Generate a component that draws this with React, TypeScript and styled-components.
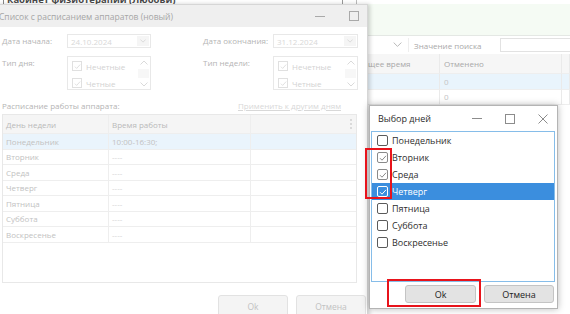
import React from 'react';
import styled, { createGlobalStyle } from 'styled-components';

const Global = createGlobalStyle`
  html, body { margin: 0; padding: 0; background: #fff; }
  body { font-family: "Open Sans", "Noto Sans", sans-serif; }
  * { box-sizing: border-box; }
`;

const Desktop = styled.div`
  position: relative;
  width: 570px;
  height: 314px;
  overflow: hidden;
  background: #fff;
`;

/* ---------- background application window ---------- */
const BgWindow = styled.div`
  display: flex;
  flex-direction: column;
  width: 100%;
  height: 100%;
`;
const BgTitleBar = styled.div`
  height: 4px;
  display: flex;
  align-items: flex-end;
  padding-left: 3px;
  border-left: 1px solid #888;
  margin-left: 3px;
`;
const BgTitle = styled.div`
  font-size: 9.5px;
  font-weight: 700;
  line-height: 12px;
  color: #4a4a4a;
  flex: 0 0 auto;
  margin-bottom: -2px;
`;
const BgMaxBox = styled.div`
  margin-left: auto;
  margin-right: 213px;
  width: 15px;
  height: 9px;
  margin-bottom: -4px;
  border: 1px solid #999;
  border-right-color: #bbb;
  background: #fff;
  flex: 0 0 auto;
`;
const BgPanel = styled.div`
  height: 32px;
  background: #f5fbf4;
  border-bottom: 1px solid #e4e8e4;
`;
const SearchRow = styled.div`
  height: 18px;
  display: grid;
  grid-template-columns: 409px 91px 1fr;
  align-items: center;
`;
const SelectCell = styled.div`
  height: 14px;
  display: flex;
  align-items: center;
  justify-content: flex-end;
  padding-right: 6px;
  border-right: 1px solid #eee;
`;
const SearchLabel = styled.span`
  font-size: 8px;
  color: #a9a9a9;
  padding-left: 5px;
`;
const SearchInput = styled.div`
  height: 14px;
  border: 1px solid #e2e2e2;
  border-right: none;
`;
const BgTable = styled.div`
  display: grid;
  grid-template-columns: 353px 87px 122px 1fr;
`;
const BgCell = styled.div<{ $head?: boolean; $sel?: boolean }>`
  height: ${p => (p.$head ? 20 : 15.5)}px;
  display: flex;
  align-items: center;
  padding-left: 4px;
  font-size: 8px;
  color: ${p => (p.$head ? '#a8a8a8' : '#c4c4c4')};
  background: ${p => (p.$head ? '#f6f6f6' : p.$sel ? '#e9f4fc' : '#fff')};
  border-right: 1px solid #eaeaea;
  border-bottom: 1px solid #eeeeee;
`;

/* ---------- main (disabled) dialog ---------- */
const MainDialog = styled.div`
  position: absolute;
  left: -4px;
  top: 4px;
  width: 372px;
  height: 330px;
  background: #fff;
  border: 1px solid #d6d6d6;
  box-shadow: 2px 0 4px rgba(0, 0, 0, 0.18);
  display: flex;
  flex-direction: column;
`;
const MainHeader = styled.div`
  height: 22px;
  background: #efefef;
  display: flex;
  align-items: center;
  padding-left: 2px;
  flex: 0 0 auto;
`;
const MainTitle = styled.span`
  font-size: 8.5px;
  color: #a6a6a6;
`;
const HeaderCtrls = styled.div`
  margin-left: auto;
  display: flex;
  align-items: center;
  gap: 24px;
  padding-right: 8px;
`;
const MinLine = styled.div<{ $c?: string }>`
  width: 10px;
  height: 1px;
  background: ${p => p.$c || '#a9a9a9'};
`;
const MaxBox = styled.div<{ $c?: string }>`
  width: 10px;
  height: 10px;
  border: 1px solid ${p => p.$c || '#a9a9a9'};
`;
const MainBody = styled.div`
  padding: 7px 10px 0 5px;
  display: flex;
  flex-direction: column;
`;
const FormGrid = styled.div`
  display: grid;
  grid-template-columns: 65px 84px 52px 70px 85px;
  grid-template-rows: 14px 34px;
  row-gap: 8px;
  align-items: start;
`;
const FieldLabel = styled.span`
  font-size: 8px;
  color: #b4b4b4;
  line-height: 14px;
  white-space: nowrap;
`;
const DateBox = styled.div`
  height: 14px;
  border: 1px solid #e8e8e8;
  display: flex;
  align-items: center;
  padding-left: 3px;
  font-size: 8px;
  color: #d8d8d8;
`;
const DropBtn = styled.div`
  margin-left: auto;
  margin-right: 1px;
  width: 12px;
  height: 10px;
  background: #f5f5f5;
  display: flex;
  align-items: center;
  justify-content: center;
`;
const CheckList = styled.div`
  height: 34px;
  border: 1px solid #e8e8e8;
  display: flex;
`;
const CheckItems = styled.div`
  flex: 1;
  display: flex;
  flex-direction: column;
  padding: 4px 0 0 4px;
  gap: 7px;
`;
const CheckItem = styled.div`
  display: flex;
  align-items: center;
  gap: 4px;
  font-size: 8px;
  color: #d2d2d2;
  height: 10px;
`;
const FadedBox = styled.div`
  width: 10px;
  height: 10px;
  border: 1px solid #e0e0e0;
  display: flex;
  align-items: center;
  justify-content: center;
`;
const ScrollBar = styled.div`
  width: 13px;
  display: flex;
  flex-direction: column;
  align-items: center;
  justify-content: space-between;
  padding: 3px 0 2px;
`;
const ScrollMid = styled.div`
  width: 11px;
  height: 9px;
  background: #f7f7f7;
`;
const SectionRow = styled.div`
  display: flex;
  align-items: center;
  margin-top: 9px;
  height: 12px;
  font-size: 8px;
`;
const SectionLabel = styled.span`
  color: #b4b4b4;
`;
const ApplyLink = styled.span`
  margin-left: auto;
  margin-right: 16px;
  color: #d8d8d8;
  text-decoration: underline;
`;
const SchedTable = styled.div`
  margin-top: 3px;
  height: 169px;
  border: 1px solid #e8e8e8;
  display: flex;
  flex-direction: column;
`;
const SchedRow = styled.div<{ $head?: boolean; $sel?: boolean }>`
  display: grid;
  grid-template-columns: 106px 142px 1fr;
  height: ${p => (p.$head ? 19 : 15.5)}px;
  background: ${p => (p.$head ? '#f5f5f5' : p.$sel ? '#eaf4fc' : '#fff')};
  border-bottom: 1px solid #eeeeee;
  flex: 0 0 auto;
`;
const SchedCell = styled.div<{ $head?: boolean; $dim?: boolean }>`
  display: flex;
  align-items: center;
  padding-left: 3px;
  font-size: 8px;
  color: ${p => (p.$head ? '#b9b9b9' : p.$dim ? '#d4d4d4' : '#c2c2c2')};
  border-right: 1px solid #eeeeee;
  &:last-child { border-right: none; justify-content: flex-end; padding-right: 4px; }
`;
const Dots = styled.div`
  display: flex;
  flex-direction: column;
  gap: 2px;
  span { width: 2px; height: 2px; background: #d0d0d0; border-radius: 1px; }
`;
const MainFooter = styled.div`
  display: flex;
  justify-content: flex-end;
  gap: 8px;
  margin-top: 12px;
  margin-right: -9px;
`;
const FadedBtn = styled.div`
  width: 70px;
  height: 22px;
  border: 1px solid #e2e2e2;
  border-radius: 3px;
  background: #f4f4f4;
  display: flex;
  align-items: center;
  justify-content: center;
  font-size: 8.5px;
  color: #c2c2c2;
`;

/* ---------- modal "Выбор дней" ---------- */
const Modal = styled.div`
  position: absolute;
  left: 369px;
  top: 105px;
  width: 189px;
  height: 204px;
  background: #fff;
  border: 1px solid #b4b4b4;
  box-shadow: 0 0 7px rgba(0, 0, 0, 0.28);
  display: flex;
  flex-direction: column;
`;
const ModalHeader = styled.div`
  height: 25px;
  display: flex;
  align-items: center;
  padding-left: 8px;
  flex: 0 0 auto;
`;
const ModalTitle = styled.span`
  font-size: 9px;
  color: #2b2b2b;
`;
const ModalCtrls = styled.div`
  margin-left: auto;
  display: flex;
  align-items: center;
  gap: 23px;
  padding-right: 9px;
`;
const DayList = styled.div`
  margin: 0 2px 0 1px;
  height: 151px;
  border: 1px solid #86bde9;
  display: flex;
  flex-direction: column;
`;
const DayItem = styled.div<{ $sel?: boolean }>`
  height: 17px;
  display: flex;
  align-items: center;
  padding-left: 5px;
  gap: 4px;
  font-size: 9px;
  color: ${p => (p.$sel ? '#fff' : '#2e2e2e')};
  background: ${p => (p.$sel ? '#3b8ede' : 'transparent')};
  flex: 0 0 auto;
`;
const Box = styled.div<{ $state: 'off' | 'on' | 'sel' }>`
  width: 11px;
  height: 11px;
  border-radius: 2px;
  border: 1px solid ${p => (p.$state === 'sel' ? '#fff' : p.$state === 'on' ? '#8a8a8a' : '#5a5a5a')};
  background: ${p => (p.$state === 'sel' ? '#3b8ede' : '#fff')};
  display: flex;
  align-items: center;
  justify-content: center;
`;
const ModalFooter = styled.div`
  display: flex;
  justify-content: flex-end;
  gap: 8px;
  padding: 3px 3px 0 0;
`;
const Btn = styled.div<{ $w: number }>`
  width: ${p => p.$w}px;
  height: 18px;
  border: 1px solid #c4c4c4;
  border-radius: 3px;
  background: #e3e3e3;
  display: flex;
  align-items: center;
  justify-content: center;
  font-size: 9px;
  color: #222;
`;

/* ---------- red annotation frames ---------- */
const Highlight = styled.div`
  position: absolute;
  border: 2px solid #e8131b;
`;

const Chevron = ({ up, c = '#cfcfcf', w = 8 }: { up?: boolean; c?: string; w?: number }) => (
  <svg width={w} height={w / 2 + 1} viewBox="0 0 8 5">
    <polyline points={up ? '0.5,4.5 4,1 7.5,4.5' : '0.5,0.5 4,4 7.5,0.5'} fill="none" stroke={c} strokeWidth="0.9" />
  </svg>
);

const Tick = ({ c, w = 8 }: { c: string; w?: number }) => (
  <svg width={w} height={w} viewBox="0 0 8 8">
    <polyline points="1,4.2 3,6.2 7,1.8" fill="none" stroke={c} strokeWidth="1" />
  </svg>
);

const days = ['Понедельник', 'Вторник', 'Среда', 'Четверг', 'Пятница', 'Суббота', 'Воскресенье'];
const dayStates: ('off' | 'on' | 'sel')[] = ['off', 'on', 'on', 'sel', 'off', 'off', 'off'];

const FadedChecks = () => (
  <CheckList>
    <CheckItems>
      <CheckItem><FadedBox><Tick c="#dcdcdc" w={7} /></FadedBox>Нечетные</CheckItem>
      <CheckItem><FadedBox><Tick c="#dcdcdc" w={7} /></FadedBox>Четные</CheckItem>
    </CheckItems>
    <ScrollBar>
      <Chevron up c="#d6d6d6" />
      <ScrollMid />
      <Chevron c="#d6d6d6" />
    </ScrollBar>
  </CheckList>
);

export default function App() {
  return (
    <Desktop>
      <Global />
      <BgWindow>
        <BgTitleBar>
          <BgTitle>Кабинет физиотерапии (Любови)</BgTitle>
          <BgMaxBox />
        </BgTitleBar>
        <BgPanel />
        <SearchRow>
          <SelectCell><Chevron c="#b8b8b8" w={9} /></SelectCell>
          <SearchLabel>Значение поиска</SearchLabel>
          <SearchInput />
        </SearchRow>
        <BgTable>
          <BgCell $head />
          <BgCell $head>Общее время</BgCell>
          <BgCell $head>Отменено</BgCell>
          <BgCell $head />
          <BgCell $sel />
          <BgCell $sel />
          <BgCell $sel>0</BgCell>
          <BgCell $sel />
          <BgCell />
          <BgCell />
          <BgCell>0</BgCell>
          <BgCell />
        </BgTable>
      </BgWindow>

      <MainDialog>
        <MainHeader>
          <MainTitle>Список с расписанием аппаратов (новый)</MainTitle>
          <HeaderCtrls>
            <MinLine />
            <MaxBox />
          </HeaderCtrls>
        </MainHeader>
        <MainBody>
          <FormGrid>
            <FieldLabel>Дата начала:</FieldLabel>
            <DateBox>24.10.2024<DropBtn><Chevron c="#cfcfcf" w={6} /></DropBtn></DateBox>
            <span />
            <FieldLabel>Дата окончания:</FieldLabel>
            <DateBox>31.12.2024<DropBtn><Chevron c="#cfcfcf" w={6} /></DropBtn></DateBox>
            <FieldLabel>Тип дня:</FieldLabel>
            <FadedChecks />
            <span />
            <FieldLabel>Тип недели:</FieldLabel>
            <FadedChecks />
          </FormGrid>
          <SectionRow>
            <SectionLabel>Расписание работы аппарата:</SectionLabel>
            <ApplyLink>Применить к другим дням</ApplyLink>
          </SectionRow>
          <SchedTable>
            <SchedRow $head>
              <SchedCell $head>День недели</SchedCell>
              <SchedCell $head>Время работы</SchedCell>
              <SchedCell $head><Dots><span /><span /><span /></Dots></SchedCell>
            </SchedRow>
            {days.map((d, i) => (
              <SchedRow key={d} $sel={i === 0}>
                <SchedCell>{d}</SchedCell>
                <SchedCell $dim={i !== 0}>{i === 0 ? '10:00-16:30;' : '----'}</SchedCell>
                <SchedCell />
              </SchedRow>
            ))}
          </SchedTable>
          <MainFooter>
            <FadedBtn>Ok</FadedBtn>
            <FadedBtn>Отмена</FadedBtn>
          </MainFooter>
        </MainBody>
      </MainDialog>

      <Modal>
        <ModalHeader>
          <ModalTitle>Выбор дней</ModalTitle>
          <ModalCtrls>
            <MinLine $c="#8c8c8c" />
            <MaxBox $c="#8c8c8c" />
            <svg width="10" height="10" viewBox="0 0 10 10">
              <path d="M0.5,0.5 L9.5,9.5 M9.5,0.5 L0.5,9.5" stroke="#8c8c8c" strokeWidth="1" />
            </svg>
          </ModalCtrls>
        </ModalHeader>
        <DayList>
          {days.map((d, i) => (
            <DayItem key={d} $sel={dayStates[i] === 'sel'}>
              <Box $state={dayStates[i]}>
                {dayStates[i] === 'on' && <Tick c="#8a8a8a" />}
                {dayStates[i] === 'sel' && <Tick c="#fff" />}
              </Box>
              {d}
            </DayItem>
          ))}
        </DayList>
        <ModalFooter>
          <Btn $w={71}>Ok</Btn>
          <Btn $w={70}>Отмена</Btn>
        </ModalFooter>
      </Modal>

      <Highlight style={{ left: 365, top: 148, width: 27, height: 51 }} />
      <Highlight style={{ left: 387, top: 279, width: 94, height: 28 }} />
    </Desktop>
  );
}
